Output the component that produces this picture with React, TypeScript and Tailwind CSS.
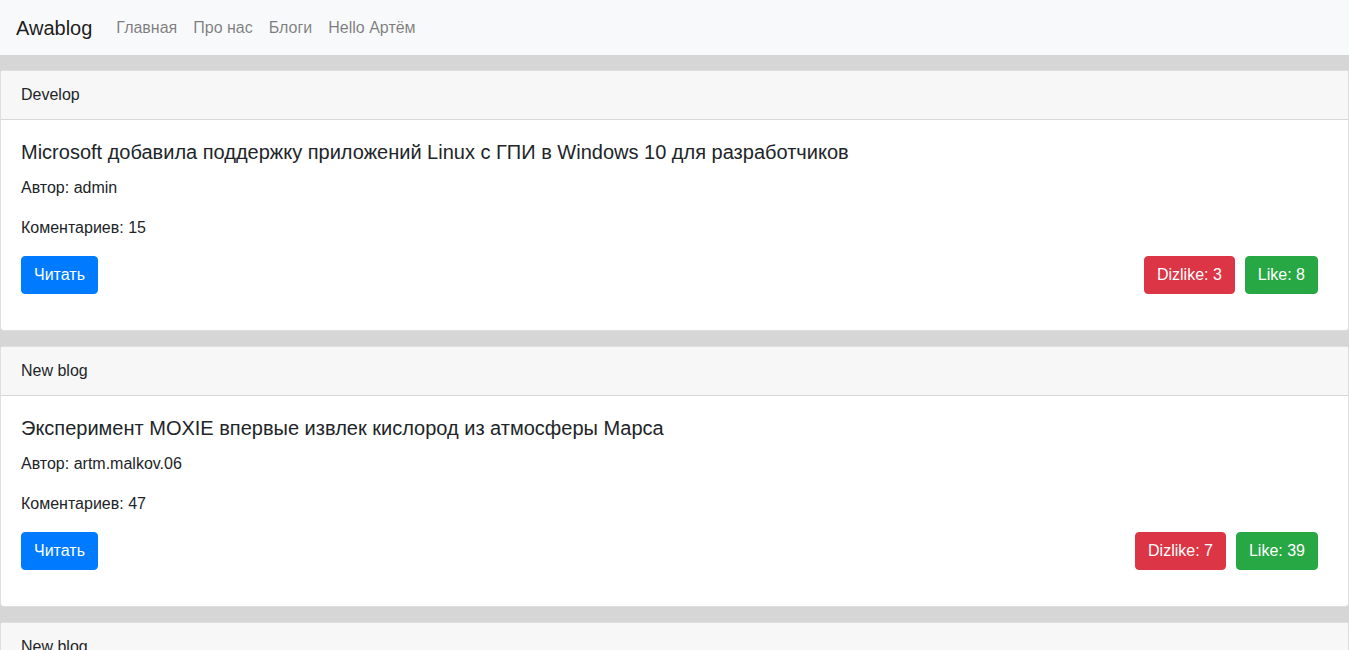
import React from 'react'

type Post = {
  blog: string
  title: string
  author: string
  comments: number
  dislikes: number
  likes: number
}

const posts: Post[] = [
  {
    blog: 'Develop',
    title: 'Microsoft добавила поддержку приложений Linux с ГПИ в Windows 10 для разработчиков',
    author: 'admin',
    comments: 15,
    dislikes: 3,
    likes: 8,
  },
  {
    blog: 'New blog',
    title: 'Эксперимент MOXIE впервые извлек кислород из атмосферы Марса',
    author: 'artm.malkov.06',
    comments: 47,
    dislikes: 7,
    likes: 39,
  },
  {
    blog: 'New blog',
    title: 'Новая статья',
    author: 'admin',
    comments: 0,
    dislikes: 0,
    likes: 0,
  },
]

const btn = 'rounded-[4px] border px-3 py-1.5 leading-6 text-white'

function PostCard({ post }: { post: Post }) {
  return (
    <div className="rounded-[4px] border border-black/[0.125] bg-white">
      <div className="border-b border-black/[0.125] bg-[#f7f7f7] px-5 py-3 leading-6">{post.blog}</div>
      <div className="p-5">
        <h5 className="mb-3 text-[20px] leading-6 font-medium">{post.title}</h5>
        <p className="mb-4 leading-6">Автор: {post.author}</p>
        <p className="mb-4 leading-6">Коментариев: {post.comments}</p>
        <div className="mb-4 flex items-center justify-between">
          <button className={`${btn} border-[#007bff] bg-[#007bff]`}>Читать</button>
          <div className="mr-[10px] flex gap-[10px]">
            <button className={`${btn} border-[#dc3545] bg-[#dc3545]`}>Dizlike: {post.dislikes}</button>
            <button className={`${btn} border-[#28a745] bg-[#28a745]`}>Like: {post.likes}</button>
          </div>
        </div>
      </div>
    </div>
  )
}

export default function App() {
  return (
    <div className="min-h-screen bg-[#d6d6d6] text-base text-[#212529] font-['Liberation_Sans',Arial,sans-serif]">
      <nav className="flex h-[55px] items-center bg-[#f8f9fa] px-4">
        <a className="mr-4 text-[20px] leading-[30px] text-black/90">Awablog</a>
        <div className="flex">
          {['Главная', 'Про нас', 'Блоги', 'Hello Артём'].map(l => (
            <a key={l} className="px-2 py-2 leading-6 text-black/50">
              {l}
            </a>
          ))}
        </div>
      </nav>
      <div className="flex flex-col gap-[15px] py-[15px]">
        {posts.map((p, i) => (
          <PostCard key={i} post={p} />
        ))}
      </div>
    </div>
  )
}
